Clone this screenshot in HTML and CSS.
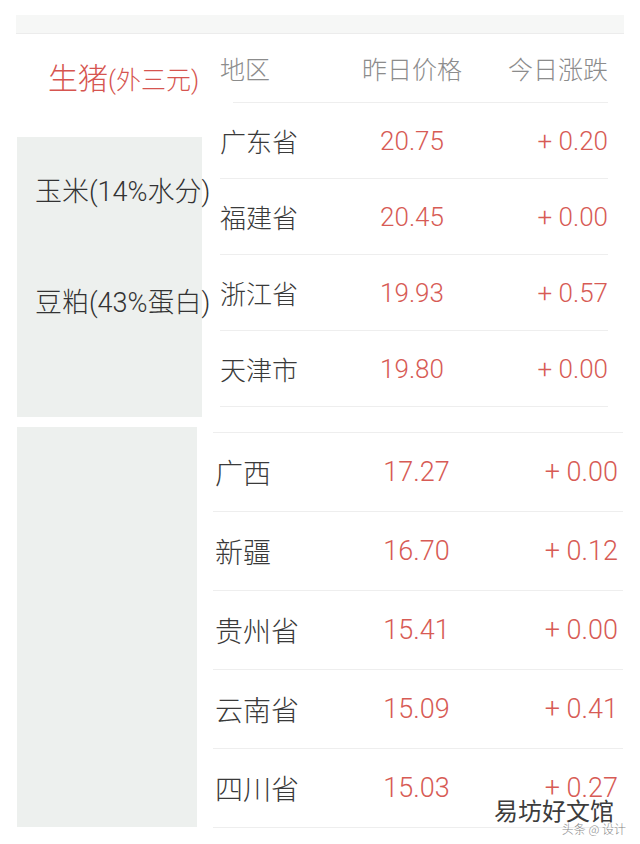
FILE: index.html
```html
<!DOCTYPE html>
<html lang="zh-CN">
<head>
<meta charset="utf-8">
<title>生猪价格</title>
<link rel="stylesheet" href="styles.css">
</head>
<body>
<div class="page">
  <div class="topband"></div>

  <section class="sec1">
    <div class="side1">
      <div class="pig"><span class="pig-main">生猪</span><span class="pig-sub">(外三元)</span></div>
      <div class="feed">
        <div class="feed-label first">玉米(14%水分)</div>
        <div class="feed-label second">豆粕(43%蛋白)</div>
      </div>
    </div>
    <div class="table1">
      <div class="thead">
        <div>地区</div>
        <div class="c2">昨日价格</div>
        <div class="c3">今日涨跌</div>
      </div>
      <div class="rule"></div>
      <div class="row1"><div class="region">广东省</div><div class="c2 red">20.75</div><div class="c3 red">+ 0.20</div></div>
      <div class="row1"><div class="region">福建省</div><div class="c2 red">20.45</div><div class="c3 red">+ 0.00</div></div>
      <div class="row1"><div class="region">浙江省</div><div class="c2 red">19.93</div><div class="c3 red">+ 0.57</div></div>
      <div class="row1"><div class="region">天津市</div><div class="c2 red">19.80</div><div class="c3 red">+ 0.00</div></div>
    </div>
  </section>

  <section class="sec2">
    <div class="side2"></div>
    <div class="table2">
      <div class="row2"><div class="region2">广西</div><div class="c2 red2">17.27</div><div class="c3 red2">+ 0.00</div></div>
      <div class="row2"><div class="region2">新疆</div><div class="c2 red2">16.70</div><div class="c3 red2">+ 0.12</div></div>
      <div class="row2"><div class="region2">贵州省</div><div class="c2 red2">15.41</div><div class="c3 red2">+ 0.00</div></div>
      <div class="row2"><div class="region2">云南省</div><div class="c2 red2">15.09</div><div class="c3 red2">+ 0.41</div></div>
      <div class="row2 last"><div class="region2">四川省</div><div class="c2 red2">15.03</div><div class="c3 red2">+ 0.27</div></div>
    </div>
  </section>

  <div class="watermark-sub">头条 @ 设计</div>
  <div class="watermark">易坊好文馆</div>
</div>
</body>
</html>
```

FILE: styles.css
```css
html, body {
  margin: 0;
  padding: 0;
  background: #ffffff;
}

body {
  font-family: Roboto, "Noto Sans CJK SC", sans-serif;
  font-weight: 300;
  color: #333333;
}

.page {
  position: relative;
  width: 640px;
  height: 844px;
  overflow: hidden;
}

.topband {
  margin: 15px 16px 0 16px;
  height: 18px;
  background: #f6f7f6;
  border-bottom: 1px solid #ececec;
}

/* ---------- upper section ---------- */
.sec1 {
  display: flex;
  align-items: flex-start;
}

.side1 {
  flex: none;
  width: 185px;
  margin-left: 17px;
  display: flex;
  flex-direction: column;
}

.pig {
  height: 103px;
  box-sizing: border-box;
  padding-top: 30px;
  padding-left: 31px;
  color: #d65550;
  white-space: nowrap;
  line-height: 30px;
}

.pig-main {
  font-size: 30px;
}

.pig-sub {
  font-size: 25px;
}

.feed {
  height: 280px;
  background: #edf0ee;
  padding-left: 18px;
  box-sizing: border-box;
}

.feed-label {
  font-size: 27px;
  line-height: 30px;
  white-space: nowrap;
  color: #333333;
}

.feed-label.first {
  padding-top: 40px;
}

.feed-label.second {
  margin-top: 81px;
}

.table1 {
  flex: none;
  width: 388px;
  margin-left: 18px;
}

.thead {
  height: 68px;
  display: grid;
  grid-template-columns: 132px 120px 136px;
  align-items: center;
  font-size: 25px;
  color: #8c8c8c;
}

.rule {
  margin-left: 13px;
  height: 1px;
  background: #eeeeee;
}

.row1 {
  height: 76px;
  box-sizing: border-box;
  border-bottom: 1px solid #eeeeee;
  display: grid;
  grid-template-columns: 132px 120px 136px;
  align-items: center;
}

.c2 {
  text-align: center;
  white-space: nowrap;
}

.c3 {
  text-align: right;
  white-space: nowrap;
}

.region {
  color: #3a3a3a;
  font-size: 26px;
}

.red {
  color: #d75b55;
  font-size: 26px;
}

/* ---------- lower section ---------- */
.sec2 {
  display: flex;
  margin-top: 10px;
}

.side2 {
  flex: none;
  width: 180px;
  height: 400px;
  margin-left: 17px;
  background: #edf0ee;
}

.table2 {
  flex: none;
  width: 410px;
  margin-left: 16px;
  padding-top: 5px;
}

.row2 {
  height: 79px;
  box-sizing: border-box;
  border-top: 1px solid #eeeeee;
  display: grid;
  grid-template-columns: 143px 121px 141px;
  padding-right: 5px;
  align-items: center;
}

.row2.last {
  height: 80px;
  border-bottom: 1px solid #eeeeee;
}

.region2 {
  padding-left: 2px;
  font-size: 28px;
  color: #3a3a3a;
}

.red2 {
  color: #d75b55;
  font-size: 27px;
}

/* ---------- watermark overlay ---------- */
.watermark {
  position: absolute;
  right: 26px;
  top: 795px;
  font-family: "Noto Sans CJK SC", sans-serif;
  font-weight: 400;
  font-size: 24px;
  line-height: 30px;
  color: #3c3c3c;
  text-shadow: -1px -1px 0 #fff, 1px -1px 0 #fff, -1px 1px 0 #fff, 1px 1px 0 #fff, 0 0 2px #fff;
}

.watermark-sub {
  position: absolute;
  right: 14px;
  top: 822px;
  font-family: "Noto Sans CJK SC", sans-serif;
  font-size: 12px;
  line-height: 14px;
  color: #8a8a8a;
}
```
